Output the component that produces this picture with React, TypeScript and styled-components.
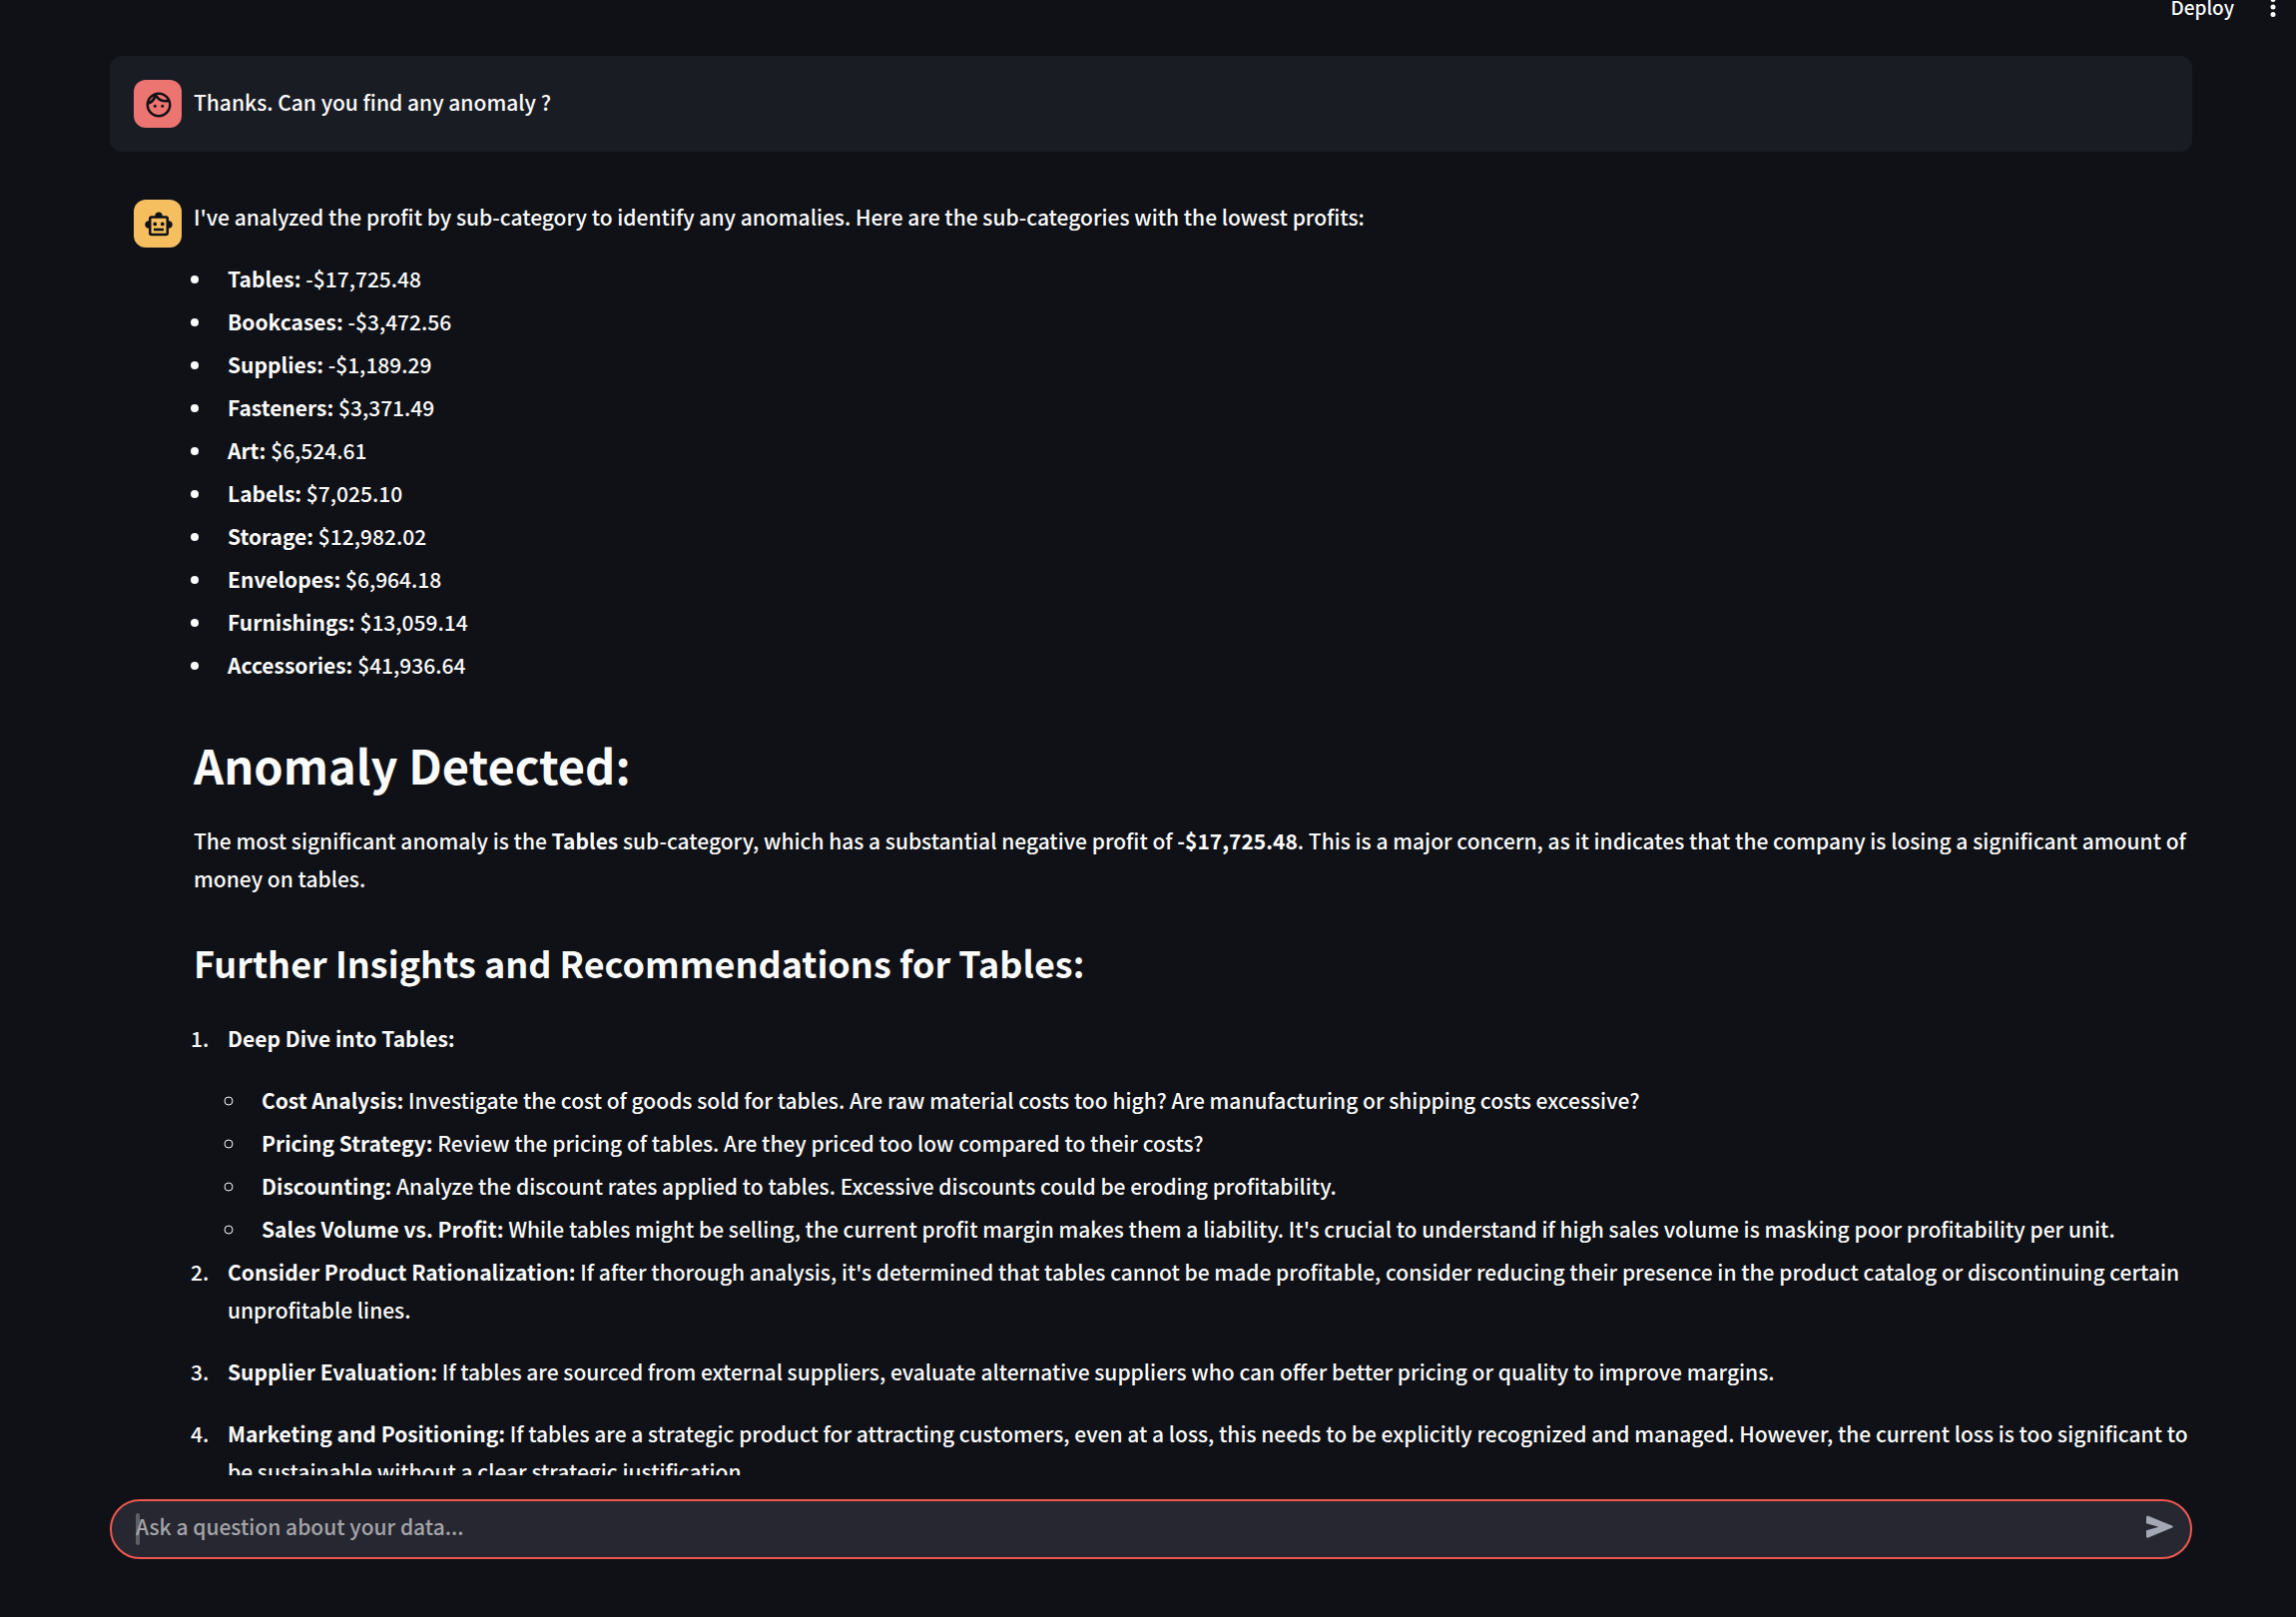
import React from "react";
import styled, { createGlobalStyle } from "styled-components";

const GlobalStyle = createGlobalStyle`
  *, *::before, *::after { box-sizing: border-box; }
  body {
    margin: 0;
    background: #0f1116;
    color: #fafafa;
    font-family: "Source Sans Pro", "Noto Sans CJK SC", "Noto Sans", sans-serif;
    font-size: 21px;
    font-weight: 500;
    line-height: 38px;
  }
  button, input { font: inherit; color: inherit; }
  strong { font-weight: 700; }
`;

const Page = styled.div`
  display: flex;
  flex-direction: column;
  height: 100vh;
  overflow: hidden;
`;

const Toolbar = styled.header`
  display: flex;
  flex: none;
  align-items: center;
  justify-content: flex-end;
  gap: 24px;
  height: 14px;
  padding-right: 8px;
`;

const ToolbarButton = styled.button`
  display: flex;
  padding: 0;
  border: 0;
  background: none;
  font-size: 19px;
  cursor: pointer;
`;

const Conversation = styled.main`
  display: flex;
  flex: 1;
  flex-direction: column;
  gap: 24px;
  min-height: 0;
  margin-top: 42px;
  padding: 0 104px 0 110px;
  overflow: hidden;
`;

const Message = styled.article<{ $filled?: boolean }>`
  display: flex;
  flex: none;
  align-items: flex-start;
  gap: 12px;
  padding: 24px ${(p) => (p.$filled ? 24 : 0)}px 24px 24px;
  border-radius: 12px;
  background: ${(p) => (p.$filled ? "#1a1c23" : "transparent")};
`;

const Avatar = styled.div<{ $color: string }>`
  display: flex;
  flex: none;
  align-items: center;
  justify-content: center;
  width: 48px;
  height: 48px;
  padding: 2px 0 0 2px;
  border-radius: 12px;
  background: ${(p) => p.$color};
  color: #0f1116;
`;

const Content = styled.div<{ $centered?: boolean }>`
  flex: 1;
  min-width: 0;
  margin: -2px 0 2px;
  align-self: ${(p) => (p.$centered ? "center" : "auto")};
`;

const Paragraph = styled.p`
  margin: 0;
`;

const Title = styled.h1`
  margin: 49px 0 25px;
  font-size: 47px;
  font-weight: 700;
  line-height: 64px;
`;

const Subtitle = styled.h2`
  margin: 37px 0 29px;
  font-size: 36px;
  font-weight: 700;
  line-height: 56px;
`;

const BulletList = styled.ul`
  margin: 24px 0 0;
  padding: 0 0 0 20px;
`;

const NumberedList = styled.ol`
  margin: 0;
  padding: 0 0 0 20px;
`;

const Item = styled.li<{ $loose?: boolean }>`
  margin-top: ${(p) => (p.$loose ? 24 : 5)}px;
  padding-left: 14px;
`;

const Dock = styled.footer`
  flex: none;
  padding: 24px 104px 58px 110px;
`;

const ChatBox = styled.form`
  display: flex;
  align-items: center;
  height: 60px;
  padding: 0 16px 0 24px;
  border: 2px solid #ee5850;
  border-radius: 30px;
  background: #262730;
`;

const Caret = styled.span`
  flex: none;
  width: 4px;
  height: 32px;
  margin-right: -4px;
  border-radius: 2px;
  background: #5f5f66;
`;

const ChatInput = styled.input`
  flex: 1;
  min-width: 0;
  height: 38px;
  padding: 0 0 6px;
  border: 0;
  outline: 0;
  background: transparent;
  &::placeholder {
    color: #a4a4a9;
    opacity: 1;
  }
`;

const SendButton = styled.button`
  display: flex;
  padding: 0 0 4px;
  border: 0;
  background: none;
  color: #a4a7b6;
  cursor: pointer;
`;

const FaceIcon = () => (
  <svg width="30" height="30" viewBox="0 0 24 24" fill="currentColor" aria-hidden="true">
    <path d="M10.25 13a1.25 1.25 0 1 1-2.5 0 1.25 1.25 0 0 1 2.5 0zM15 11.75a1.25 1.25 0 1 0 0 2.5 1.25 1.25 0 0 0 0-2.5zM22 12c0 5.52-4.48 10-10 10S2 17.52 2 12 6.48 2 12 2s10 4.48 10 10zM10.66 4.12C12.06 6.44 14.6 8 17.5 8c.46 0 .91-.05 1.34-.12C17.44 5.56 14.9 4 12 4c-.46 0-.91.05-1.34.12zM4.42 9.47a8.046 8.046 0 0 0 3.66-4.44 8.046 8.046 0 0 0-3.66 4.44zM20 12c0-.78-.12-1.53-.33-2.24-.7.15-1.42.24-2.17.24a10 10 0 0 1-7.76-3.69A10.016 10.016 0 0 1 4 11.86c.01.04 0 .09 0 .14 0 4.41 3.59 8 8 8s8-3.59 8-8z" />
  </svg>
);

const RobotIcon = () => (
  <svg width="30" height="30" viewBox="0 0 24 24" fill="currentColor" aria-hidden="true">
    <path
      fillRule="evenodd"
      d="M20 9V7c0-1.1-.9-2-2-2h-3c0-1.66-1.34-3-3-3S9 3.34 9 5H6c-1.1 0-2 .9-2 2v2c-1.66 0-3 1.34-3 3s1.34 3 3 3v4c0 1.1.9 2 2 2h12c1.1 0 2-.9 2-2v-4c1.66 0 3-1.34 3-3s-1.34-3-3-3zm-2 10H6V7h12v12z"
    />
    <path d="M9 10a1.5 1.5 0 1 0 0 3 1.5 1.5 0 0 0 0-3zM15 10a1.5 1.5 0 1 0 0 3 1.5 1.5 0 0 0 0-3zM8 15h8v2H8z" />
  </svg>
);

const MoreIcon = () => (
  <svg width="30" height="30" viewBox="0 0 24 24" fill="currentColor" aria-hidden="true">
    <circle cx="12" cy="6" r="2" />
    <circle cx="12" cy="12" r="2" />
    <circle cx="12" cy="18" r="2" />
  </svg>
);

const SendIcon = () => (
  <svg width="28" height="24" viewBox="0 0 28 24" fill="currentColor" aria-hidden="true">
    <path d="M0 2.2C0 1 1 .4 2 .8L26 10.6c1 .4 1 1.6 0 2L2 22.6C1 23 0 22.4 0 21.2V15.2L12.5 11.7 0 8.2Z" />
  </svg>
);

const profits = [
  ["Tables", "-$17,725.48"],
  ["Bookcases", "-$3,472.56"],
  ["Supplies", "-$1,189.29"],
  ["Fasteners", "$3,371.49"],
  ["Art", "$6,524.61"],
  ["Labels", "$7,025.10"],
  ["Storage", "$12,982.02"],
  ["Envelopes", "$6,964.18"],
  ["Furnishings", "$13,059.14"],
  ["Accessories", "$41,936.64"],
];

const questions = [
  ["Cost Analysis", "Investigate the cost of goods sold for tables. Are raw material costs too high? Are manufacturing or shipping costs excessive?"],
  ["Pricing Strategy", "Review the pricing of tables. Are they priced too low compared to their costs?"],
  ["Discounting", "Analyze the discount rates applied to tables. Excessive discounts could be eroding profitability."],
  ["Sales Volume vs. Profit", "While tables might be selling, the current profit margin makes them a liability. It's crucial to understand if high sales volume is masking poor profitability per unit."],
];

const actions = [
  ["Supplier Evaluation", "If tables are sourced from external suppliers, evaluate alternative suppliers who can offer better pricing or quality to improve margins."],
  ["Marketing and Positioning", "If tables are a strategic product for attracting customers, even at a loss, this needs to be explicitly recognized and managed. However, the current loss is too significant to be sustainable without a clear strategic justification."],
];

export default function App() {
  return (
    <>
      <GlobalStyle />
      <Page>
        <Toolbar>
          <ToolbarButton type="button">Deploy</ToolbarButton>
          <ToolbarButton type="button" aria-label="Main menu">
            <MoreIcon />
          </ToolbarButton>
        </Toolbar>
        <Conversation>
          <Message $filled>
            <Avatar $color="#ec7571">
              <FaceIcon />
            </Avatar>
            <Content $centered>
              <Paragraph>Thanks. Can you find any anomaly ?</Paragraph>
            </Content>
          </Message>
          <Message>
            <Avatar $color="#f5bf5f">
              <RobotIcon />
            </Avatar>
            <Content>
              <Paragraph>
                I've analyzed the profit by sub-category to identify any anomalies. Here are the sub-categories with the
                lowest profits:
              </Paragraph>
              <BulletList>
                {profits.map(([name, value]) => (
                  <Item key={name}>
                    <strong>{name}:</strong> {value}
                  </Item>
                ))}
              </BulletList>
              <Title>Anomaly Detected:</Title>
              <Paragraph>
                The most significant anomaly is the <strong>Tables</strong> sub-category, which has a substantial
                negative profit of <strong>-$17,725.48</strong>. This is a major concern, as it indicates that the
                company is losing a significant amount of money on tables.
              </Paragraph>
              <Subtitle>Further Insights and Recommendations for Tables:</Subtitle>
              <NumberedList>
                <Item>
                  <strong>Deep Dive into Tables:</strong>
                  <BulletList>
                    {questions.map(([name, text]) => (
                      <Item key={name}>
                        <strong>{name}:</strong> {text}
                      </Item>
                    ))}
                  </BulletList>
                </Item>
                <Item>
                  <strong>Consider Product Rationalization:</strong> If after thorough analysis, it's determined that
                  tables cannot be made profitable, consider reducing their presence in the product catalog or
                  discontinuing certain unprofitable lines.
                </Item>
                {actions.map(([name, text]) => (
                  <Item key={name} $loose>
                    <strong>{name}:</strong> {text}
                  </Item>
                ))}
              </NumberedList>
            </Content>
          </Message>
        </Conversation>
        <Dock>
          <ChatBox onSubmit={(e) => e.preventDefault()}>
            <Caret />
            <ChatInput type="text" aria-label="Ask a question about your data" placeholder="Ask a question about your data..." />
            <SendButton type="submit" aria-label="Send message">
              <SendIcon />
            </SendButton>
          </ChatBox>
        </Dock>
      </Page>
    </>
  );
}
